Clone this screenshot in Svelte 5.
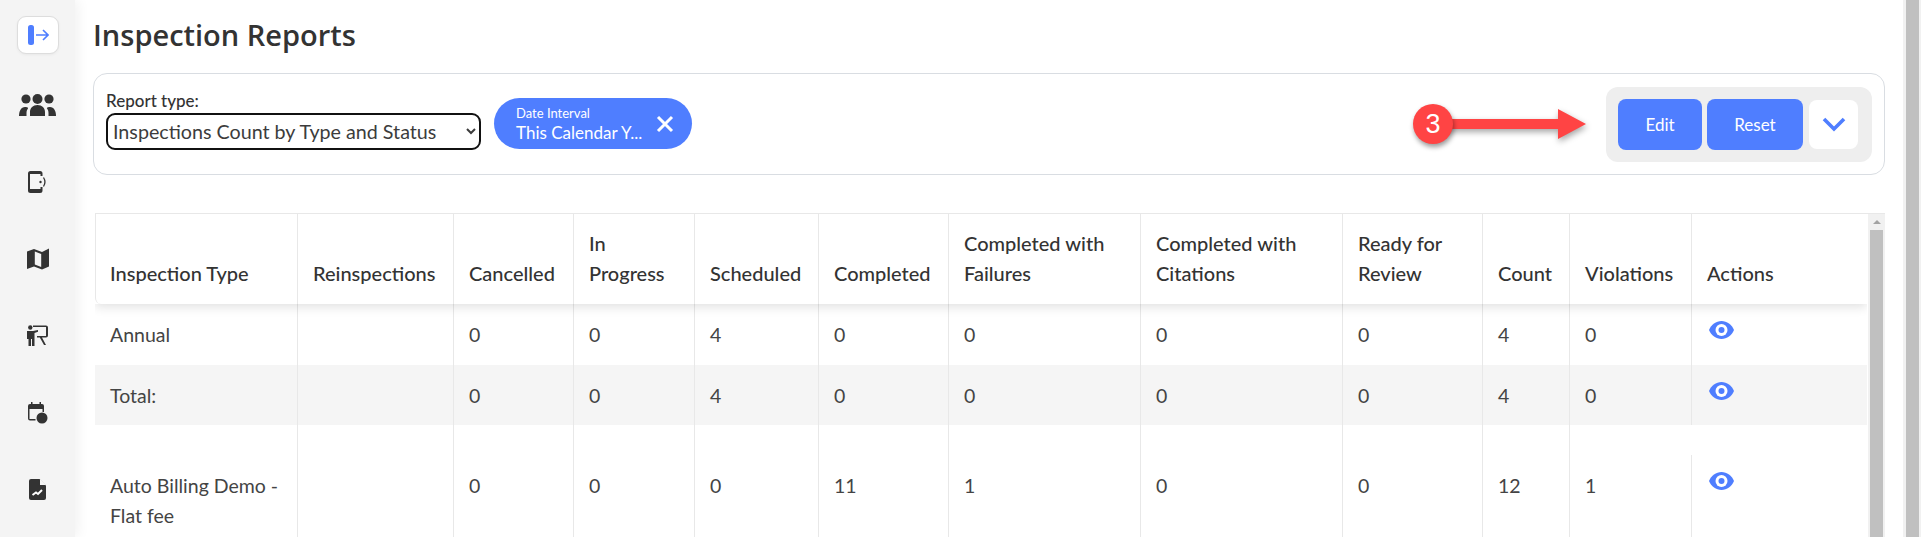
<script>
    const columns = [
        { label: ['Inspection Type'], width: 203 },
        { label: ['Reinspections'], width: 156 },
        { label: ['Cancelled'], width: 120 },
        { label: ['In', 'Progress'], width: 121 },
        { label: ['Scheduled'], width: 124 },
        { label: ['Completed'], width: 130 },
        { label: ['Completed with', 'Failures'], width: 192 },
        { label: ['Completed with', 'Citations'], width: 202 },
        { label: ['Ready for', 'Review'], width: 140 },
        { label: ['Count'], width: 87 },
        { label: ['Violations'], width: 122 },
        { label: ['Actions'], width: 175 }
    ];

    const rows = [
        { name: ['Annual'], values: ['', 0, 0, 4, 0, 0, 0, 0, 4, 0] },
        { name: ['Total:'], values: ['', 0, 0, 4, 0, 0, 0, 0, 4, 0], total: true },
        { name: ['Auto Billing Demo -', 'Flat fee'], values: ['', 0, 0, 0, 11, 1, 0, 0, 12, 1], tall: true }
    ];
</script>

<div class="page">
    <aside class="sidebar">
        <button class="toggle" aria-label="Expand">
            <svg width="22" height="20" viewBox="0 0 22 20">
                <rect x="1" y="0" width="6" height="20" rx="2.5" fill="#4f7eff" />
                <path d="M9 10h12M16 5l5 5-5 5" fill="none" stroke="#4f7eff" stroke-width="1.6" />
            </svg>
        </button>
        <div class="nav-item first">
            <svg width="37" height="22" viewBox="0 0 37 22" fill="#333">
                <circle cx="7" cy="5" r="4.6" /><circle cx="18.500" cy="5" r="5" /><circle cx="30" cy="5" r="4.600" />
                <path d="M11 22v-4c0-4 3-7 7.500-7s7.500 3 7.500 7v4zM0 22c0-5 2-9 6-9 1.500 0 2.500.4 3.200 1-1 1.500-1.700 3-1.700 5v3zM37 22c0-5-2-9-6-9-1.500 0-2.500.4-3.200 1 1 1.500 1.700 3 1.700 5v3z" />
            </svg>
        </div>
        <div class="nav-item">
            <svg width="19" height="22" viewBox="0 0 19 22">
                <path d="M2.500 0h9.500a2.500 2.500 0 0 1 2.500 2.500V5h-2V3H2v15h10.500v-2h2v3.500a2.500 2.500 0 0 1-2.500 2.500H2.500A2.500 2.500 0 0 1 0 19.500v-17A2.500 2.500 0 0 1 2.500 0z" fill="#333" />
                <circle cx="12.500" cy="11" r="1.200" fill="#333" />
                <path d="M15.500 6.500c1.800 2.800 1.800 6.200 0 9" fill="none" stroke="#333" stroke-width="1.300" />
            </svg>
        </div>
        <div class="nav-item">
            <svg width="22" height="22" viewBox="0 0 22 22">
                <path d="M0 3.500 7 1l8 3 7-3.500v18l-7 3-8-3-7 2.500z" fill="#333" />
                <path d="M7.800 3.500 14.200 6v13l-6.400-2.500z" fill="#f4f4f4" />
            </svg>
        </div>
        <div class="nav-item">
            <svg width="21" height="21" viewBox="0 0 21 21" fill="#333">
                <circle cx="3.300" cy="2.500" r="2.200" />
                <path d="M0 6h6l5-1v1.800L7.500 8v13H5v-7H4v7H1.500v-7H0z" />
                <path d="M6 0.500h13a2 2 0 0 1 2 2v8a2 2 0 0 1-2 2h-4l4 7.500h-2l-4.200-7.500H10v-1.500h9v-9H6z" />
            </svg>
        </div>
        <div class="nav-item">
            <svg width="20" height="22" viewBox="0 0 20 22">
                <path d="M3 0h1.500v2h7V0H13v2h1a2 2 0 0 1 2 2v6h-1.500V7h-13v10h6v1.500H2a2 2 0 0 1-2-2V4a2 2 0 0 1 2-2h1z" fill="#333" />
                <circle cx="14" cy="16" r="5.500" fill="#333" />
            </svg>
        </div>
        <div class="nav-item">
            <svg width="17" height="21" viewBox="0 0 17 21">
                <path d="M2 0h8.500L17 6.500V19a2 2 0 0 1-2 2H2a2 2 0 0 1-2-2V2a2 2 0 0 1 2-2z" fill="#333" />
                <path d="M11 0v6h6z" fill="#f4f4f4" />
                <path d="M3.500 16 7 13.500l2 1.500 4-4" fill="none" stroke="#fff" stroke-width="2" />
            </svg>
        </div>
    </aside>

    <main class="content">
        <h1>Inspection Reports</h1>

        <section class="filters">
            <div class="report-type">
                <label for="report">Report type:</label>
                <select id="report">
                    <option>Inspections Count by Type and Status</option>
                </select>
            </div>
            <div class="pill">
                <div class="pill-text">
                    <span class="pill-label">Date Interval</span>
                    <span class="pill-value">This Calendar Y...</span>
                </div>
                <svg width="18" height="18" viewBox="0 0 18 18">
                    <path d="M2 2l14 14M16 2 2 16" stroke="#fff" stroke-width="3" />
                </svg>
            </div>
            <div class="actions">
                <button class="primary edit">Edit</button>
                <button class="primary reset">Reset</button>
                <button class="more" aria-label="More">
                    <svg width="24" height="15" viewBox="0 0 24 15">
                        <path d="M2 2l10 10L22 2" fill="none" stroke="#4f7eff" stroke-width="3.600" />
                    </svg>
                </button>
            </div>

            <div class="callout">
                <svg width="176" height="44" viewBox="0 0 176 44">
                    <path d="M20 17h125V7l28 15-28 15V27H20z" fill="#ff4444" />
                </svg>
                <span class="badge">3</span>
            </div>
        </section>

        <div class="table-wrap">
            <div class="table-scroll">
                <table>
                    <colgroup>
                        {#each columns as col}
                            <col style="width: {col.width}px" />
                        {/each}
                    </colgroup>
                    <thead>
                        <tr>
                            {#each columns as col}
                                <th>
                                    {#each col.label as line}
                                        <div>{line}</div>
                                    {/each}
                                </th>
                            {/each}
                        </tr>
                    </thead>
                    <tbody>
                        {#each rows as row}
                            <tr class:total={row.total} class:tall={row.tall}>
                                <td>
                                    {#each row.name as line}
                                        <div>{line}</div>
                                    {/each}
                                </td>
                                {#each row.values as value}
                                    <td>{value}</td>
                                {/each}
                                <td class="eye-cell">
                                    <div class="eye-inner">
                                        <svg width="25" height="18" viewBox="0 0 25 18">
                                            <path d="M12.500 0C18 0 22.700 3.500 25 9c-2.300 5.500-7 9-12.500 9S2.300 14.500 0 9C2.300 3.500 7 0 12.500 0z" fill="#4f7eff" />
                                            <circle cx="12.500" cy="9" r="6" fill="#fff" />
                                            <circle cx="12.500" cy="9" r="3" fill="#4f7eff" />
                                        </svg>
                                    </div>
                                </td>
                            </tr>
                        {/each}
                    </tbody>
                </table>
            </div>
            <div class="table-scrollbar">
                <span class="arrow-up"></span>
                <span class="thumb"></span>
            </div>
        </div>
    </main>

    <div class="page-scrollbar"><span></span></div>
</div>

<style>
    :global(body) {
        margin: 0;
        background: #fff;
        overflow: hidden;
    }

    .page {
        display: flex;
        height: 537px;
        overflow: hidden;
        font-family: Lato, "Liberation Sans", sans-serif;
        color: #444;
    }

    .sidebar {
        width: 75px;
        flex: none;
        background: #f4f4f4;
        box-shadow: 3px 0 12px rgba(0, 0, 0, 0.06);
        display: flex;
        flex-direction: column;
        align-items: center;
        padding-top: 16px;
        box-sizing: border-box;
        position: relative;
    }

    .toggle {
        width: 42px;
        height: 38px;
        padding: 0;
        background: #fff;
        border: 1px solid #ddd;
        border-radius: 9px;
        display: flex;
        align-items: center;
        justify-content: center;
        box-shadow: 0 1px 3px rgba(0, 0, 0, 0.05);
    }

    .nav-item {
        height: 77px;
        width: 100%;
        display: flex;
        align-items: center;
        justify-content: center;
    }

    .nav-item.first {
        margin-top: 12px;
    }

    .content {
        flex: 1;
        min-width: 0;
        padding: 0 18px;
    }

    h1 {
        margin: 0;
        padding-top: 15px;
        height: 73px;
        box-sizing: border-box;
        font-family: "Open Sans", sans-serif;
        font-size: 29px;
        line-height: 40px;
        font-weight: 600;
        color: #333;
    }

    .filters {
        height: 102px;
        box-sizing: border-box;
        border: 1px solid #d9dde2;
        border-radius: 14px;
        display: flex;
        align-items: center;
        padding: 0 12px;
        position: relative;
    }

    .report-type {
        display: flex;
        flex-direction: column;
        margin-top: -9px;
    }

    label {
        font-size: 17px;
        font-weight: 500;
        line-height: 24px;
        color: #333;
    }

    select {
        width: 375px;
        height: 37px;
        background: #fff;
        border: 2px solid #111;
        border-radius: 9px;
        padding: 0 1px;
        font-family: inherit;
        font-size: 19.7px;
        color: #3c3c3c;
    }

    .pill {
        margin-left: 13px;
        margin-top: -1px;
        width: 198px;
        height: 51px;
        box-sizing: border-box;
        padding: 0 18px 0 22px;
        background: #4f7eff;
        border-radius: 26px;
        color: #fff;
        display: flex;
        align-items: center;
        justify-content: space-between;
    }

    .pill-text {
        display: flex;
        flex-direction: column;
    }

    .pill-label {
        font-size: 13px;
        line-height: 17px;
    }

    .pill-value {
        font-size: 17px;
        line-height: 21px;
        white-space: nowrap;
    }

    .actions {
        margin-left: auto;
        width: 266px;
        height: 75px;
        box-sizing: border-box;
        background: #eeeeee;
        border-radius: 12px;
        display: flex;
        align-items: center;
        padding-left: 12px;
    }

    .primary {
        height: 51px;
        padding: 0;
        background: #4f7eff;
        color: #fff;
        border: none;
        border-radius: 8px;
        font-family: inherit;
        font-size: 17px;
    }

    .edit {
        width: 84px;
    }

    .reset {
        width: 96px;
        margin-left: 5px;
    }

    .more {
        width: 49px;
        height: 49px;
        margin-left: 6px;
        padding: 0;
        background: #fff;
        border: none;
        border-radius: 8px;
        display: flex;
        align-items: center;
        justify-content: center;
    }

    .callout {
        position: absolute;
        left: 1319px;
        top: 28px;
        width: 176px;
        height: 44px;
    }

    .callout svg {
        display: block;
        filter: drop-shadow(1px 3px 3px rgba(0, 0, 0, 0.35));
    }

    .badge {
        position: absolute;
        left: 0;
        top: 2px;
        width: 40px;
        height: 40px;
        border-radius: 50%;
        background: #ff4444;
        box-shadow: 1px 3px 5px rgba(0, 0, 0, 0.4);
        color: #fff;
        font-family: "Liberation Sans", sans-serif;
        font-size: 27px;
        line-height: 40px;
        text-align: center;
    }

    .table-wrap {
        margin-top: 38px;
        margin-left: 2px;
        border-top: 1px solid #e8e8e8;
        display: flex;
        height: 324px;
        position: relative;
    }

    .table-scroll {
        flex: 1;
        min-width: 0;
        overflow: hidden;
    }

    table {
        width: 1772px;
        table-layout: fixed;
        border-collapse: separate;
        border-spacing: 0;
    }

    th {
        height: 90px;
        box-sizing: border-box;
        padding: 0 15px 16px;
        text-align: left;
        vertical-align: bottom;
        font-size: 20px;
        font-weight: 500;
        line-height: 30px;
        color: #333;
        background: #fff;
        border-right: 1px solid #e8e8e8;
        white-space: nowrap;
    }

    th:first-child {
        border-left: 1px solid #e8e8e8;
        border-bottom-left-radius: 6px;
        padding-left: 14px;
    }

    th:last-child {
        border-right: none;
        border-bottom-right-radius: 6px;
        border-top-right-radius: 6px;
    }

    thead tr {
        position: relative;
        box-shadow: 0 3px 10px rgba(0, 0, 0, 0.12);
    }

    td {
        padding: 16px 15px 15px;
        font-size: 19.5px;
        line-height: 30px;
        color: #444;
        border-right: 1px solid #e8e8e8;
        vertical-align: top;
        white-space: nowrap;
    }

    td:last-child {
        border-right: none;
    }

    .total td {
        padding-bottom: 14px;
        background: #f5f5f5;
    }

    .tall td {
        padding-top: 46px;
    }

    .eye-cell {
        position: relative;
    }

    .eye-inner {
        height: 30px;
        box-sizing: border-box;
        padding: 1px 0 0 2px;
    }

    .eye-inner svg {
        display: block;
    }

    /* the last cell is offset, so its divider starts lower down */
    .tall td:nth-last-child(2) {
        border-right: none;
    }

    .tall .eye-cell::before {
        content: '';
        position: absolute;
        left: -1px;
        top: 30px;
        bottom: 0;
        border-left: 1px solid #e8e8e8;
    }

    .table-scrollbar {
        width: 17px;
        flex: none;
        margin-left: 1px;
        background: #f1f1f1;
        display: flex;
        flex-direction: column;
        align-items: center;
    }

    .arrow-up {
        margin-top: 6px;
        border: 4px solid transparent;
        border-top: none;
        border-bottom: 4px solid #a3a3a3;
    }

    .thumb {
        width: 13px;
        flex: 1;
        margin-top: 6px;
        background: #c0c0c0;
    }

    .page-scrollbar {
        width: 18px;
        flex: none;
        margin-right: 6px;
        background: #f1f1f1;
        display: flex;
        justify-content: center;
    }

    .page-scrollbar span {
        width: 13px;
        background: #c0c0c0;
    }
</style>
